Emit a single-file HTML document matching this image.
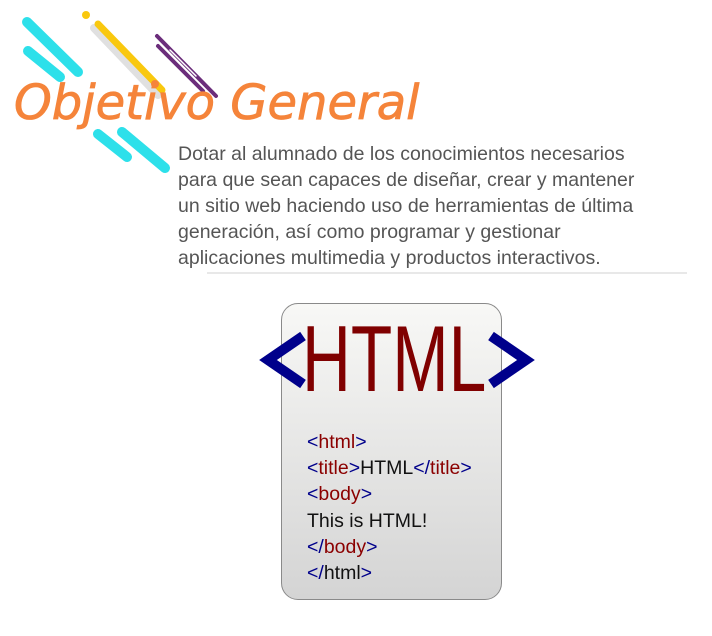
<!DOCTYPE html>
<html><head><meta charset="utf-8"><style>
body{margin:0;width:712px;height:636px;background:#fff;position:relative;overflow:hidden;font-family:"Liberation Sans",sans-serif}
.t{position:absolute;left:14px;top:75px;font-family:"DejaVu Sans",sans-serif;font-style:oblique;font-size:48px;color:#f5843a;white-space:nowrap;-webkit-text-stroke:0.8px #f5843a}
.p{position:absolute;left:178px;top:141px;font-size:19.5px;line-height:26px;color:#555;white-space:nowrap}
.hr{position:absolute;left:207px;top:272px;width:480px;height:2px;background:#e8e8e8}
.card{position:absolute;left:281px;top:303px;width:219px;height:295px;border:1px solid #8a8a8a;border-radius:17px;background:linear-gradient(#f8f8f6,#d4d4d4)}
.big{position:absolute;left:302px;top:312px;font-size:94px;color:#800000;transform:scaleX(0.72);transform-origin:0 0;line-height:1}
.code{position:absolute;left:307px;top:429px;font-size:19.5px;line-height:26.2px;color:#111;white-space:nowrap}
.b{color:#00008b}.r{color:#8b0000}
</style></head><body>
<svg width="712" height="636" style="position:absolute;left:0;top:0">
<g stroke-linecap="round" fill="none">
<line x1="27" y1="22" x2="78" y2="72" stroke="#2de0ea" stroke-width="10"/>
<line x1="122" y1="132" x2="165" y2="168" stroke="#2de0ea" stroke-width="10"/>
<line x1="28" y1="51" x2="60" y2="77" stroke="#2de0ea" stroke-width="10"/>
<line x1="98" y1="134" x2="127" y2="157" stroke="#2de0ea" stroke-width="10"/>
<line x1="94" y1="28" x2="158" y2="95" stroke="#e0e0e0" stroke-width="8"/>
<line x1="98" y1="24" x2="162" y2="90" stroke="#f9c80e" stroke-width="7"/>
<circle cx="86" cy="15" r="4" fill="#f9c80e" stroke="none"/>
<circle cx="155" cy="84" r="4" fill="#f5843a" stroke="none"/>
<line x1="157" y1="36" x2="216" y2="96" stroke="#6b2d7b" stroke-width="4"/>
<line x1="158" y1="46" x2="203" y2="91" stroke="#6b2d7b" stroke-width="4"/>
<line x1="170" y1="50" x2="196" y2="76" stroke="#fff" stroke-width="1.5"/>
</g>
</svg>
<div class="t">Objetivo General</div>
<div class="p">Dotar al alumnado de los conocimientos necesarios<br>para que sean capaces de diseñar, crear y mantener<br>un sitio web haciendo uso de herramientas de última<br>generación, así como programar y gestionar<br>aplicaciones multimedia y productos interactivos.</div>
<div class="hr"></div>
<div class="card"></div>
<svg width="712" height="636" style="position:absolute;left:0;top:0">
<polyline points="303,336 268,360 303,384" stroke="#00008b" stroke-width="10" fill="none"/>
<polyline points="491,336 526,360 491,384" stroke="#00008b" stroke-width="10" fill="none"/>
</svg>
<div class="big">HTML</div>
<div class="code"><span class="b">&lt;</span><span class="r">html</span><span class="b">&gt;</span><br><span class="b">&lt;</span><span class="r">title</span><span class="b">&gt;</span>HTML<span class="b">&lt;/</span><span class="r">title</span><span class="b">&gt;</span><br><span class="b">&lt;</span><span class="r">body</span><span class="b">&gt;</span><br>This is HTML!<br><span class="b">&lt;/</span><span class="r">body</span><span class="b">&gt;</span><br><span class="b">&lt;/</span>html<span class="b">&gt;</span></div>
</body></html>
